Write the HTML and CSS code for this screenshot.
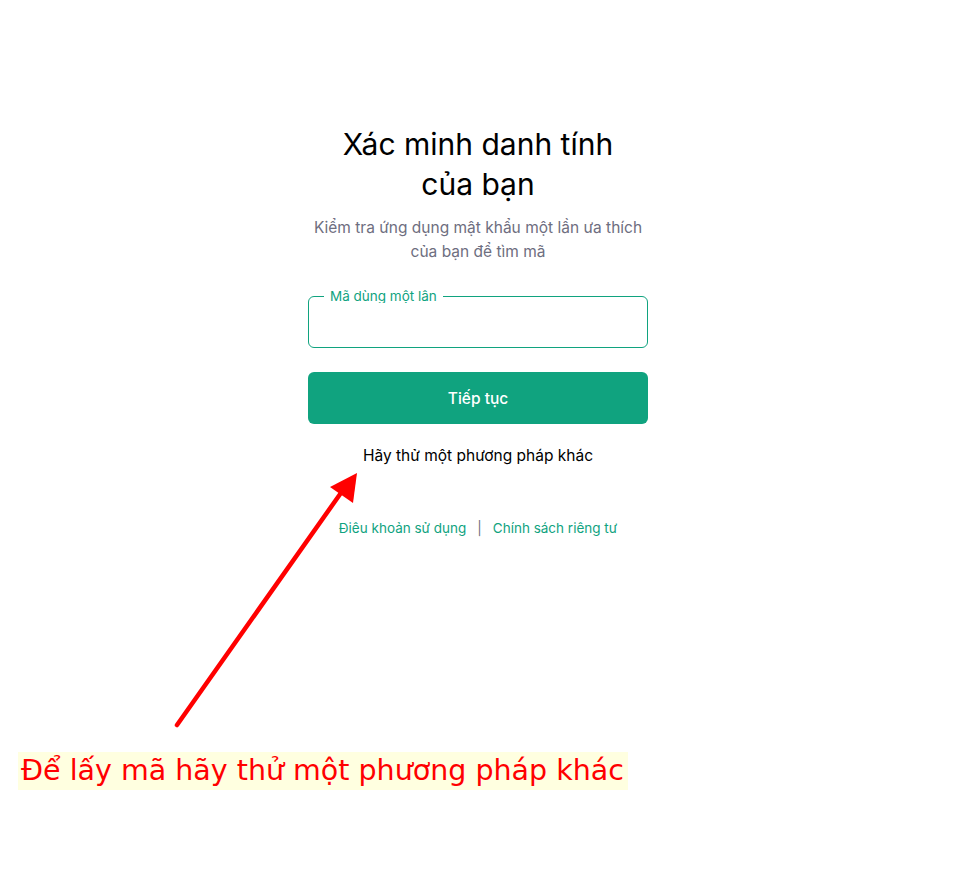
FILE: index.html
```html
<!DOCTYPE html>
<html lang="vi">
<head>
  <meta charset="UTF-8">
  <meta name="viewport" content="width=device-width, initial-scale=1.0">
  <title>Xác minh danh tính</title>
  <link rel="stylesheet" href="styles.css">
</head>
<body>
<main class="page">
  <section class="box">
    <h1 class="title">Xác minh danh tính<br>của bạn</h1>
    <p class="subtitle">Kiểm tra ứng dụng mật khẩu một lần ưa thích của bạn để tìm mã</p>

    <fieldset class="field">
      <legend class="field-label">Mã dùng một lân</legend>
      <input type="text" class="field-input">
    </fieldset>

    <button type="button" class="btn">Tiếp tục</button>

    <a class="other" href="#">Hãy thử một phương pháp khác</a>

    <footer class="links">
      <a href="#">Điêu khoản sử dụng</a>
      <span class="sep">|</span>
      <a href="#">Chính sách riêng tư</a>
    </footer>
  </section>
</main>

<!-- annotation drawn on top of the screenshot -->
<svg class="arrow" width="959" height="885" viewBox="0 0 959 885">
  <line x1="177" y1="725" x2="343" y2="490" stroke="#ff0000" stroke-width="4.5" stroke-linecap="round"/>
  <polygon points="357,473 330,487 353,503" fill="#ff0000"/>
</svg>
<div class="note">Để lấy mã hãy thử một phương pháp khác</div>
</body>
</html>
```

FILE: styles.css
```css
body {
  margin: 0;
  font-family: Inter, "Noto Sans", sans-serif;
  background: #fff;
  color: #202123;
}

.page {
  display: flex;
  justify-content: center;
  padding-top: 124px;
}

.box {
  width: 340px;
  margin-right: 3px;
  display: flex;
  flex-direction: column;
  align-items: center;
  text-align: center;
}

.title {
  margin: 0;
  font-size: 30px;
  font-weight: 400;
  line-height: 40px;
  color: #000;
}

.subtitle {
  margin: 12px 0 0;
  width: 340px;
  font-size: 15.5px;
  line-height: 24px;
  color: #6e6e80;
}

.field {
  margin: 26px 0 0;
  padding: 0 14px;
  width: 340px;
  height: 58px;
  box-sizing: border-box;
  border: 1px solid #10a37f;
  border-radius: 6px;
  text-align: left;
}

.field-label {
  padding: 0 6px;
  margin-left: 1px;
  font-size: 13.5px;
  line-height: 13px;
  color: #10a37f;
}

.field-input {
  border: none;
  outline: none;
  width: 100%;
  height: 36px;
  font-size: 16px;
}

.btn {
  margin-top: 24px;
  width: 340px;
  height: 52px;
  border: none;
  border-radius: 6px;
  background: #10a37f;
  color: #fff;
  font-family: inherit;
  font-size: 15.5px;
  font-weight: 500;
  cursor: pointer;
}

.other {
  margin-top: 22px;
  font-size: 15.5px;
  line-height: 20px;
  color: #000;
  text-decoration: none;
}

.links {
  margin-top: 52px;
  display: flex;
  gap: 11px;
  font-size: 13.5px;
  line-height: 20px;
}

.links a {
  color: #10a37f;
  text-decoration: none;
}

.sep {
  color: #6e6e80;
}

.arrow {
  position: absolute;
  left: 0;
  top: 0;
  pointer-events: none;
}

.note {
  position: absolute;
  left: 18px;
  top: 752px;
  width: 610px;
  height: 38px;
  padding-left: 3px;
  box-sizing: border-box;
  background: #ffffe0;
  color: #ff0000;
  font-family: "DejaVu Sans", sans-serif;
  font-size: 28.5px;
  line-height: 38px;
  white-space: nowrap;
}
```
